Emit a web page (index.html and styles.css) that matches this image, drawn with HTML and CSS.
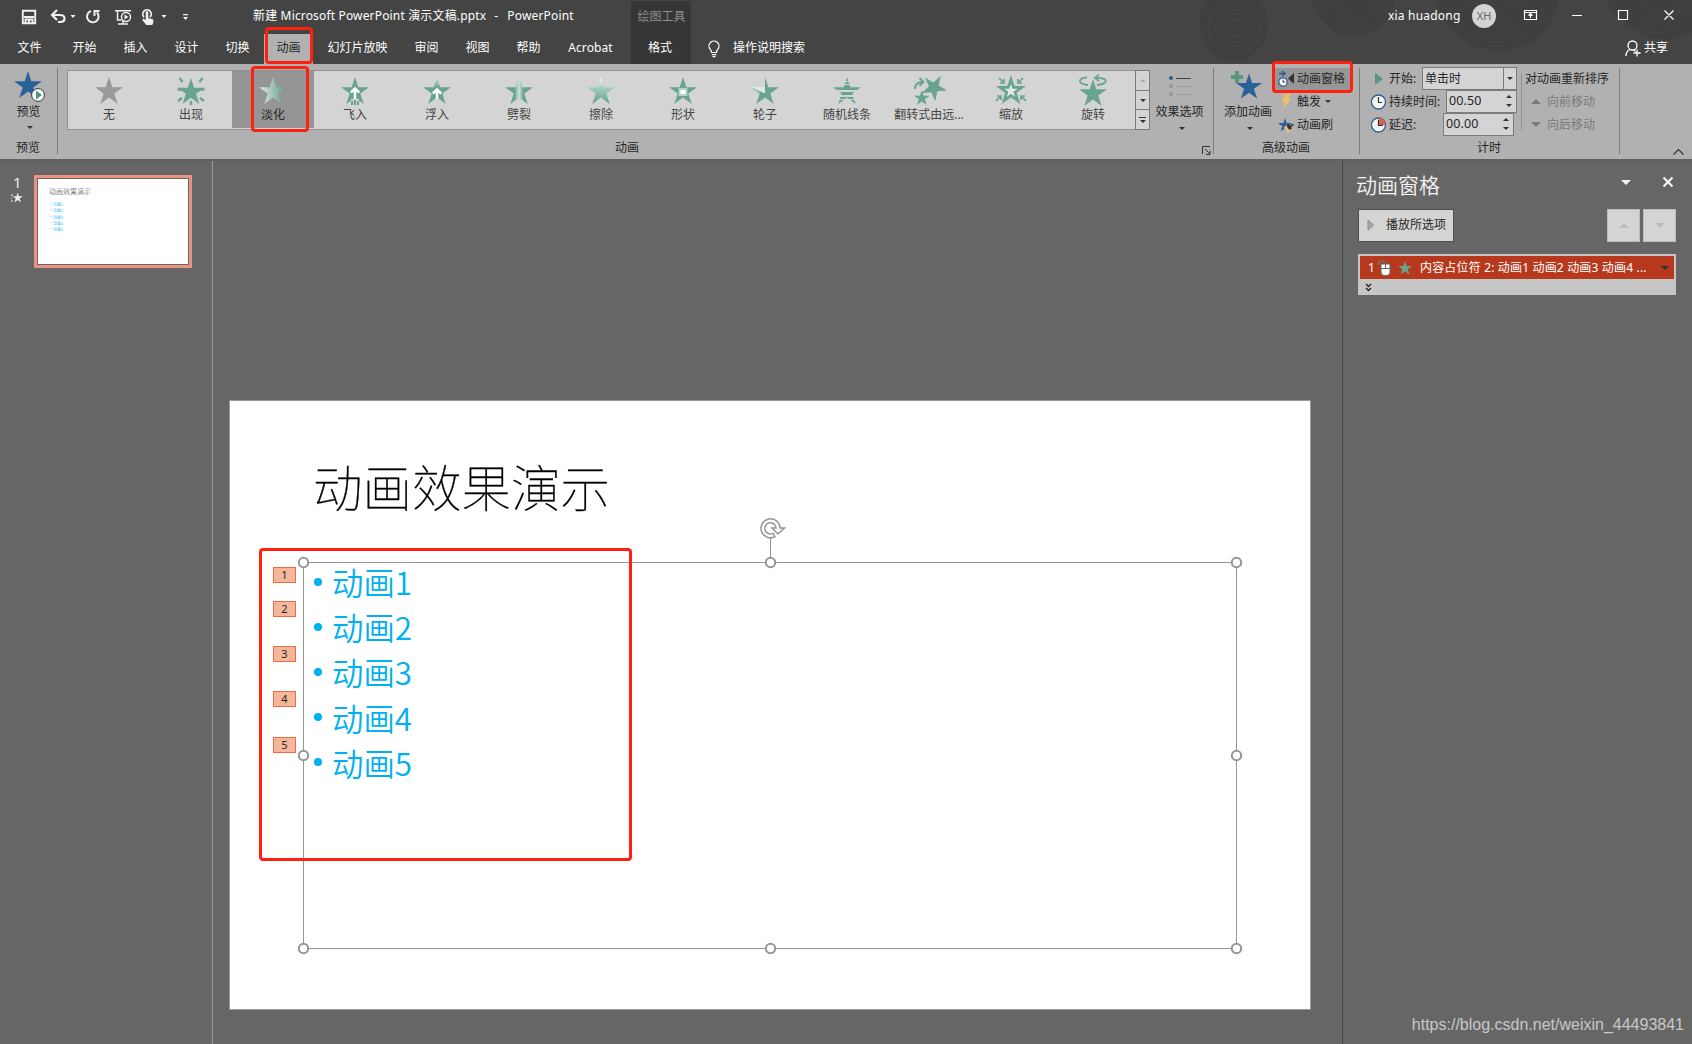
FILE: index.html
```html
<!DOCTYPE html>
<html lang="zh-CN">
<head>
<meta charset="utf-8">
<title>新建 Microsoft PowerPoint 演示文稿.pptx - PowerPoint</title>
<link rel="stylesheet" href="styles.css">
</head>
<body>
<svg width="0" height="0" class="defs">
  <defs>
    <linearGradient id="fadeX"><stop offset="0" stop-color="#dfeae5"/><stop offset="1" stop-color="#5c9c87"/></linearGradient>
    <linearGradient id="fadeY" x2="0" y2="1"><stop offset="0" stop-color="#f4f8f6"/><stop offset=".45" stop-color="#9fc9ba"/><stop offset="1" stop-color="#5fa08b"/></linearGradient>
    <linearGradient id="floatY" x2="0" y2="1"><stop offset="0" stop-color="#d3e3dc"/><stop offset=".4" stop-color="#68a490"/></linearGradient>
    <linearGradient id="splitX"><stop offset=".34" stop-color="#68a490"/><stop offset=".5" stop-color="#cfe2da"/><stop offset=".66" stop-color="#68a490"/></linearGradient>
    <path id="star" d="M14 0l3.3 10.2H28l-8.7 6.3 3.4 10.5L14 20.6 5.3 27l3.4-10.5L0 10.2h10.7z"/>
    <clipPath id="bars"><path d="M0 0h28v4H0zM0 5h28v2H0zM0 8h28v5H0zM0 15h28v3H0zM0 20h28v2H0zM0 23h28v5H0z"/></clipPath>
  </defs>
</svg>
<div class="app">
  <header class="header">
    <svg class="rings" width="512" height="64" viewBox="1180 0 512 64">
      <g fill="#3f3f3f"><path d="M1199 20l3-11 5-9h53l6 12 2 16-4 14-9 12-12 7-14 1-13-5-9-11-6-14zM1310 0h86l-8 18-14 12-22 7-18-5-14-14zM1434 0h126l-10 24-16 17-32 11-28-5-24-19zM1606 0h86v32l-20 8-22-2-22-12-15-15z"/></g>
      <g fill="none" stroke="#454545" stroke-width=".8">
        <circle cx="1236" cy="28" r="4"/><circle cx="1236" cy="28" r="9"/><circle cx="1235" cy="28" r="14"/><circle cx="1235" cy="28" r="19"/><circle cx="1234" cy="28" r="26" stroke-width="1.500"/>
        <ellipse cx="1353" cy="-3" rx="34" ry="33"/><ellipse cx="1353" cy="-3" rx="26" ry="25"/><ellipse cx="1353" cy="-3" rx="19" ry="18"/><ellipse cx="1353" cy="-3" rx="12" ry="11"/>
        <ellipse cx="1496" cy="-3" rx="50" ry="45"/><ellipse cx="1496" cy="-3" rx="42" ry="38"/><ellipse cx="1496" cy="-3" rx="34" ry="30"/><ellipse cx="1496" cy="-3" rx="26" ry="23"/><ellipse cx="1496" cy="-3" rx="17" ry="15"/>
        <ellipse cx="1654" cy="2" rx="36" ry="31"/><ellipse cx="1654" cy="2" rx="28" ry="24"/><ellipse cx="1654" cy="2" rx="20" ry="17"/><ellipse cx="1654" cy="2" rx="12" ry="10"/>
      </g>
    </svg>
    <div class="titlebar">
      <svg class="quick" width="200" height="32" viewBox="0 0 200 32" fill="none" stroke="#f0f0f0" stroke-width="1.600">
        <path d="M22.800 10.800h12.400v12.400H22.800zM24 17h10M25.500 23v-3.500h7V23" stroke-width="1.900"/><path d="M28 20h2v3h-2z" fill="#f0f0f0" stroke="none"/>
        <path d="M53 15h7c6 0 6 7 0 7h-2M57 10l-5 5 5 5" stroke-width="2.200"/>
        <path d="M97 12.500a5.800 5.800 0 1 1-6-1.500M99.500 11h-5v5" stroke-width="2"/>
        <path d="M115 10.700h16M117.500 11v9h4M118 24h10M123 20v4" stroke-width="1.400"/><circle cx="126" cy="17" r="4.500" stroke-width="1.400"/><path d="M124.500 14.500l4 2.500-4 2.500z" fill="#f0f0f0" stroke="none"/>
        <path d="M144 17a4.200 4.200 0 1 1 6 0" stroke-width="1.800"/><path d="M145.700 12q1.300-2 2.600 0v6l5 1.500v3l-1 2.500h-6l-4-5 1-1.500 2.400 1.500z" fill="#f0f0f0" stroke="none"/>
        <path d="M70.500 15h5l-2.500 3zM161.500 15h5l-2.500 3zM183 17h5l-2.500 3zM183 14h5v1.200h-5z" fill="#f0f0f0" stroke="none"/>
      </svg>
      <div class="doc-title">新建 Microsoft PowerPoint 演示文稿.pptx<span class="dash">-</span>PowerPoint</div>
      <div class="user">xia huadong</div>
      <div class="avatar">XH</div>
      <svg class="winbtns" width="184" height="32" viewBox="1508 0 184 32" fill="none" stroke="#fff" stroke-width="1.200">
        <path d="M1524.500 10.500h12v9h-12zM1524.500 12.500h12M1530.500 18v-4M1528.500 15.500l2-2 2 2M1572 15.500h10M1618.500 10.500h9v9h-9zM1664.500 10.500l9 9M1673.500 10.500l-9 9"/>
      </svg>
    </div>
    <nav class="tabs">
      <span class="tab file">文件</span><span class="tab">开始</span><span class="tab">插入</span><span class="tab">设计</span><span class="tab">切换</span><span class="tab active">动画<i class="mark mark-tab"></i></span><span class="tab">幻灯片放映</span><span class="tab">审阅</span><span class="tab">视图</span><span class="tab">帮助</span><span class="tab acrobat">Acrobat</span>
      <span class="tab format">格式</span>
      <svg class="bulb" width="14" height="18" viewBox="0 0 14 18" fill="none" stroke="#fff" stroke-width="1.200"><path d="M4.500 12.500q0-2-1.500-3.500a5 5 0 1 1 8 0q-1.500 1.500-1.500 3.500zM4.800 14.600h4.500M5.500 16.600h3"/></svg>
      <span class="search">操作说明搜索</span>
      <span class="share"><svg width="16" height="17" viewBox="0 0 16 17" fill="none" stroke="#fff" stroke-width="1.300"><circle cx="7.500" cy="5.500" r="4.500"/><path d="M1 16q0-5 4-6.500M8.500 10l2 1.500M12 9.500v7M8.500 13h7"/></svg>共享</span>
    </nav>
    <div class="context-tool">绘图工具</div>
  </header>

  <section class="ribbon">
    <div class="group preview">
      <svg width="31" height="31" viewBox="0 0 31 31"><use href="#star" fill="#2b6199"/><circle cx="24" cy="24" r="6.400" fill="#fff" stroke="#333"/><path d="M22 19.500l6 4.500-6 4.500z" fill="#4f947d"/></svg>
      <span>预览</span><b class="tri"></b>
      <label>预览</label>
    </div>
    <div class="group gallery-group">
      <div class="gallery">
        <div class="fx"><svg viewBox="0 0 34 32"><use href="#star" x="3" y="3" fill="#999"/></svg>无</div>
        <div class="fx"><svg viewBox="0 0 34 32"><use href="#star" transform="translate(3.500 4) scale(.96)" fill="#68a490"/><path d="M5.500 4l3 4M28.500 4l-3 4M3.500 15l4 1M30.500 15l-4 1M4 27l4-3M30 27l-4-3M17 27v4" stroke="#68a490" stroke-width="2.400"/></svg>出现</div>
        <div class="fx selected"><svg viewBox="0 0 34 32"><use href="#star" x="3" y="3" fill="url(#fadeX)"/></svg>淡化<i class="mark mark-fx"></i></div>
        <div class="fx"><svg viewBox="0 0 34 32"><use href="#star" x="3" y="3" fill="#68a490"/><path d="M13 25h8v6h-8z" fill="#d4d4d4"/><path d="M17 25V15M12.800 18.500l4.200-4 4.200 4" fill="none" stroke="#fff" stroke-width="2.500"/><path d="M14 27v4M17 26v5M20 27v4" stroke="#68a490" stroke-width="2"/></svg>飞入</div>
        <div class="fx"><svg viewBox="0 0 34 32"><use href="#star" x="3" y="3" fill="url(#floatY)"/><path d="M17 25v-9M12.800 19.500l4.200-4 4.200 4" fill="none" stroke="#fff" stroke-width="2.500"/></svg>浮入</div>
        <div class="fx"><svg viewBox="0 0 34 32"><use href="#star" x="3" y="3" fill="url(#splitX)"/></svg>劈裂</div>
        <div class="fx"><svg viewBox="0 0 34 32"><use href="#star" x="3" y="3" fill="url(#fadeY)"/></svg>擦除</div>
        <div class="fx"><svg viewBox="0 0 34 32"><use href="#star" x="3" y="3" fill="#68a490"/><path d="M13.500 15h7v6h-7z" fill="#fff" stroke="#b5d2c8" stroke-width="1.800"/></svg>形状</div>
        <div class="fx"><svg viewBox="0 0 34 32"><use href="#star" x="3" y="3" fill="#68a490"/><path d="M3 3h14v10H3z" fill="#d4d4d4"/><path d="M3 13h14v7l-5-1z" fill="url(#fadeX)"/><path d="M17 13v7l-5-1z" fill="#68a490"/><path d="M3.500 13H17v6.500z" fill="#dfeae5"/></svg>轮子</div>
        <div class="fx"><svg viewBox="0 0 34 32"><g transform="translate(3 3)"><use href="#star" fill="#68a490" clip-path="url(#bars)"/></g></svg>随机线条</div>
        <div class="fx"><svg viewBox="0 0 34 32"><use href="#star" transform="translate(22 13.500) rotate(30) scale(.92) translate(-14 -14.700)" fill="#68a490"/><use href="#star" transform="translate(2 16) scale(.56)" fill="#68a490"/><path d="M3 15q0-7 8-7M7.500 4l4 4-4 4" fill="none" stroke="#68a490" stroke-width="2"/></svg>翻转式由远...</div>
        <div class="fx"><svg viewBox="0 0 34 32"><use href="#star" transform="translate(6 5.500) scale(.78)" fill="#e2ece8" stroke="#68a490" stroke-width="3.500"/><path d="M5 4l5 5M10 5v4H6M29 4l-5 5M24 5v4h4M2 27l5-5M3 22h4v4M32 27l-5-5M31 22h-4v4" fill="none" stroke="#68a490" stroke-width="1.700"/></svg>缩放</div>
        <div class="fx"><svg viewBox="0 0 34 32"><use href="#star" x="3" y="5" fill="#68a490"/><path d="M12 11C2 10 1 4 11 3.500M19 4c14-1 14 6 2 7M23 .500l-4 3.500 4 3" fill="none" stroke="#68a490" stroke-width="1.800"/></svg>旋转</div>
        <div class="scroller"><span><b class="tri up faint"></b></span><span><b class="tri"></b></span><span class="more"><b class="tri"></b></span></div>
      </div>
      <label>动画</label>
    </div>
    <div class="group effect">
      <svg width="24" height="24" viewBox="0 0 24 24"><circle cx="3" cy="4" r="2.100" fill="#2b6199"/><circle cx="3" cy="12" r="2.100" fill="#999"/><circle cx="3" cy="20" r="2.100" fill="#999"/><path d="M8 4.500h15" stroke="#444"/><path d="M8 12.500h15M8 20.500h15" stroke="#999"/></svg>
      <span>效果选项</span><b class="tri"></b>
      <svg class="launcher" width="9" height="9" viewBox="0 0 9 9" fill="none" stroke="#333"><path d="M.5 8V.5H8M3 3l5 5M8 4.500V8.500H4"/></svg>
    </div>
    <div class="group advanced">
      <div class="add">
        <svg width="34" height="30" viewBox="0 0 34 30"><path d="M5 0h4v4h4v4H9v4H5V8H1V4h4z" fill="#5a957f"/><use href="#star" transform="translate(6 2.500) scale(.93)" fill="#2b6199"/></svg>
        <span>添加动画</span><b class="tri"></b>
      </div>
      <div class="adv-list">
        <div class="adv on"><svg width="17" height="16" viewBox="0 0 17 16"><path d="M1 2.500h5M4 0l3 2.500L4 5" fill="none" stroke="#2b6199" stroke-width="1.600"/><circle cx="5" cy="11" r="4.200" fill="#fff" stroke="#2b6199" stroke-width="1.300"/><path d="M5 8.500V11h2.500" fill="none" stroke="#333"/><path d="M16 2v11l-6-5.500z" fill="#333"/></svg>动画窗格<i class="mark mark-pane"></i></div>
        <div class="adv"><svg width="17" height="16" viewBox="0 0 17 16"><path d="M7 0h6l-3 5h3L5 15l2-7H3z" fill="#f0c068"/></svg>触发<b class="tri"></b></div>
        <div class="adv"><svg width="17" height="16" viewBox="0 0 17 16"><use href="#star" transform="translate(0 1) scale(.5)" fill="#2b6199"/><path d="M6 10l3-2 4 5-3 3-2-2z" fill="#e8bd78"/><path d="M9.500 9l2 3 1.500-1-2-3zM12.500 9l3-1.500" fill="#333" stroke="#333" stroke-width="1.400"/></svg>动画刷</div>
      </div>
      <label>高级动画</label>
    </div>
    <div class="group timing">
      <div class="time-fields">
        <div class="row"><svg width="18" height="18" viewBox="0 0 18 18"><path d="M5 3l8 6-8 6z" fill="#5a957f"/></svg>开始:<div class="field combo">单击时<span><b class="tri"></b></span></div></div>
        <div class="row"><svg width="18" height="18" viewBox="0 0 18 18"><circle cx="8.500" cy="9" r="7" fill="#f4f4f4" stroke="#2b6199" stroke-width="1.300"/><path d="M8.500 4v5.500H12" fill="none" stroke="#333" stroke-width="1.200"/></svg>持续时间:<div class="field spin dur">00.50<span><b class="tri up"></b><b class="tri"></b></span></div></div>
        <div class="row"><svg width="18" height="18" viewBox="0 0 18 18"><circle cx="8.500" cy="9" r="7" fill="#f4f4f4" stroke="#2b6199" stroke-width="1.300"/><path d="M8.500 9V1.500a7 7 0 0 1 7 7.500z" fill="#d4654b"/><path d="M8.500 4v5.500H13" fill="none" stroke="#333" stroke-width="1.200"/></svg>延迟:<div class="field spin delay">00.00<span><b class="tri up"></b><b class="tri"></b></span></div></div>
      </div>
      <div class="reorder">
        <div>对动画重新排序</div>
        <div class="off"><b class="tri up big"></b>向前移动</div>
        <div class="off"><b class="tri big"></b>向后移动</div>
      </div>
      <label>计时</label>
    </div>
    <svg class="collapse" width="13" height="8" viewBox="0 0 13 8" fill="none" stroke="#333" stroke-width="1.200"><path d="M1.500 6.500l5-5 5 5"/></svg>
  </section>

  <main class="body">
    <aside class="thumbs">
      <div class="num">1<svg width="12" height="12" viewBox="0 0 12 12"><use href="#star" transform="translate(1.500 .5) scale(.37)" fill="#eee"/><path d="M0 3h2M0 6h1M0 9h2" stroke="#eee"/></svg></div>
      <div class="thumb">
        <div class="t-title">动画效果演示</div>
        <ul><li>动画1</li><li>动画2</li><li>动画3</li><li>动画4</li><li>动画5</li></ul>
      </div>
    </aside>
    <section class="stage">
      <div class="slide">
        <h1>动画效果演示</h1>
        <ul class="bullets"><li>动画1</li><li>动画2</li><li>动画3</li><li>动画4</li><li>动画5</li></ul>
        <svg class="selection" width="1082" height="609" viewBox="229 400 1082 609" fill="none" stroke="#969696">
          <path d="M303.500 562.500h933v386h-933zM770.500 562V538"/>
          <g fill="#fff" stroke-width="2"><circle cx="303.500" cy="562.500" r="4.700"/><circle cx="770.500" cy="562.500" r="4.700"/><circle cx="1236.500" cy="562.500" r="4.700"/><circle cx="303.500" cy="755.500" r="4.700"/><circle cx="1236.500" cy="755.500" r="4.700"/><circle cx="303.500" cy="948.500" r="4.700"/><circle cx="770.500" cy="948.500" r="4.700"/><circle cx="1236.500" cy="948.500" r="4.700"/></g>
          <path d="M775 536.700A9.500 9.500 0 1 1 780 528h4.500l-6.500 6-6-6h4A5.600 5.600 0 1 0 773 533.300z" fill="#fff" stroke-width="1.500"/>
        </svg>
        <span class="tag t1">1</span><span class="tag t2">2</span><span class="tag t3">3</span><span class="tag t4">4</span><span class="tag t5">5</span>
        <i class="mark mark-body"></i>
      </div>
    </section>
    <aside class="pane">
      <div class="pane-head"><span>动画窗格</span><b class="tri big light"></b><svg width="12" height="12" viewBox="0 0 12 12" stroke="#f4f4f4" stroke-width="2.200"><path d="M1.500 1.500l9 9M10.500 1.500l-9 9"/></svg></div>
      <div class="pane-tools">
        <div class="play"><svg width="8" height="12" viewBox="0 0 8 12"><path d="M1 1l5.500 5L1 11z" fill="#aaa" stroke="#888"/></svg>播放所选项</div>
        <div class="sq"><b class="tri up big"></b></div><div class="sq"><b class="tri big"></b></div>
      </div>
      <div class="list">
        <div class="item"><span class="n">1</span>
          <svg width="36" height="18" viewBox="0 0 36 18"><path d="M0 5h2.500V2h4.500v3" fill="none" stroke="#777"/><path d="M4 5h9v8q0 3.500-4.500 3.500T4 13z" fill="#fff" stroke="#666"/><path d="M4 9.500h9M8.500 5v4.500" stroke="#666"/><use href="#star" transform="translate(21 2) scale(.5)" fill="#68a490"/></svg>
          <span class="desc">内容占位符 2: 动画1 动画2 动画3 动画4 ...</span><b class="tri dk"></b></div>
        <svg class="expand" width="7" height="9" viewBox="0 0 7 9" fill="none" stroke="#222" stroke-width="1.300"><path d="M1 1l2.500 2.500L6 1M1 5l2.500 2.500L6 5"/></svg>
      </div>
      <div class="watermark">https://blog.csdn.net/weixin_44493841</div>
    </aside>
  </main>
</div>
</body>
</html>
```
FILE: styles.css
```css
* { box-sizing: border-box; }
body { margin: 0; background: #666; font: 12px/16px "Noto Sans", "Noto Sans CJK SC", sans-serif; color: #262626; overflow: hidden; }
.defs { position: absolute; }
.app { width: 1692px; height: 1044px; display: flex; flex-direction: column; white-space: nowrap; }
i { font-style: normal; }
.mark { position: absolute; border: 3px solid #ff2010; border-radius: 4px; z-index: 5; }

/* title bar and tabs */
.header { position: relative; height: 64px; background: #444; color: #fff; flex: none; }
.rings { position: absolute; right: 0; top: 0; }
.titlebar { position: relative; height: 32px; display: flex; align-items: center; }
.doc-title { margin-left: 53px; width: 1135px; letter-spacing: .16px; }
.dash { margin: 0 9px 0 8px; }
.user { width: 84px; letter-spacing: .2px; }
.avatar { width: 24px; height: 24px; border-radius: 50%; background: #d4d4d4; color: #666; text-align: center; line-height: 24px; font-size: 11px; }
.winbtns { margin-left: auto; }
.tabs { position: relative; z-index: 1; height: 32px; display: flex; align-items: stretch; line-height: 28px; padding-left: 3px; }
.tab { width: 51px; text-align: center; padding-top: 2px; }
.tab.file { width: 53px; margin-right: 3px; }
.tab:nth-child(7) { width: 87px; }
.tab.active { position: relative; width: 49px; margin: 2px 1px 0; padding-top: 0; background: #b1b1b1; color: #262626; }
.mark-tab { left: 1px; top: -7px; width: 48px; height: 37px; }
.tab.acrobat { width: 73px; letter-spacing: .1px; }
.tab.format { width: 60px; margin-left: 3px; }
.bulb { margin: 8px 0 0 17px; }
.search { margin-left: 12px; padding-top: 2px; }
.share { margin-left: auto; margin-right: 24px; padding-top: 2px; display: flex; gap: 3px; }
.share svg { margin-top: 6px; }
.context-tool { position: absolute; left: 631px; top: 1px; width: 60px; height: 63px; background: #363636; color: #8c8c8c; text-align: center; padding: 8px 0 0 1px; }

/* ribbon */
.ribbon { position: relative; height: 95px; background: #b1b1b1; display: flex; flex: none; }
.group { position: relative; height: 95px; padding-top: 4px; display: flex; }
.group::after { content: ""; position: absolute; right: 0; top: 4px; height: 86px; width: 1px; background: #7c7c7c; }
.group > label { position: absolute; left: 0; right: 2px; top: 76px; text-align: center; }
.tri { display: inline-block; flex: none; width: 0; height: 0; border: 3px solid transparent; border-top-color: #333; border-bottom: 0; }
.tri.up { border-top: 0; border-bottom: 3px solid #333; }
.tri.up.faint { border-bottom-color: #aaa; }
.tri.big { border-width: 5px; border-bottom-width: 0; }
.tri.up.big { border-bottom-width: 5px; border-top-width: 0; }
.preview { width: 58px; flex-direction: column; align-items: center; padding-top: 7px; }
.preview > svg { margin-left: 1px; }
.preview > span { margin: 2px 1px 6px 0; }
.preview .tri { margin-left: 2px; }
.gallery-group { width: 1084px; margin-left: 9px; padding-top: 6px; }
.gallery-group::after { display: none; }
.group.gallery-group > label { left: 10px; right: auto; width: 1100px; }
.gallery { height: 60px; width: 1083px; border: 1px solid #919191; background: #d4d4d4; display: flex; }
.fx { position: relative; width: 82px; flex: none; height: 57px; text-align: center; display: flex; flex-direction: column; align-items: center; color: #444; }
.fx svg { width: 34px; height: 32px; margin: 3px 0 1px; }
.fx.selected { background: #959595; color: #262626; }
.mark-fx { left: 19px; top: -5px; width: 58px; height: 66px; }
.scroller { width: 15px; height: 60px; margin: -1px -1px 0 auto; flex: none; border: 1px solid #7c7c7c; display: flex; flex-direction: column; }
.scroller span { height: 19px; border-bottom: 1px solid #7c7c7c; display: flex; align-items: center; justify-content: center; flex: 1; }
.scroller .more { border: 0; flex-direction: column; }
.more::before { content: ""; width: 7px; height: 1px; background: #333; margin-bottom: 2px; }
.effect { width: 63px; flex-direction: column; align-items: center; padding: 10px 6px 0 0; }
.effect > span { margin: 6px 0 7px; }
.effect > .tri { margin-left: 4px; }
.effect > svg:first-child { margin-left: 0; }
.launcher { position: absolute; left: 51px; top: 82px; }
.advanced { width: 146px; }
.add { width: 62px; margin-left: 3px; display: flex; flex-direction: column; align-items: center; padding-top: 3px; }
.add svg { margin-right: 2px; }
.add span { margin: 3px 0 7px; }
.add .tri { margin-left: 4px; }
.adv-list { margin-left: -4px; }
.adv { position: relative; height: 23px; display: flex; align-items: center; gap: 2px; padding: 0 0 2px 3px; width: 76px; }
.adv .tri { margin-left: 2px; }
.adv.on { background: #969696; height: 22px; margin-bottom: 1px; padding-bottom: 0; }
.mark-pane { left: -3px; top: -7px; width: 81px; height: 32px; }
.timing { width: 260px; }
.time-fields { width: 161px; padding-left: 10px; margin-top: -1px; }
.row { display: flex; align-items: center; height: 23px; gap: 1px; }
.row:nth-child(n+2) { line-height: 14px; padding-bottom: 0; }
.field { margin-left: auto; height: 23px; border: 1px solid #7c7c7c; background: #d4d4d4; display: flex; align-items: center; padding-left: 2px; font-size: 12px; }
.row:nth-child(1), .row:nth-child(2) { padding-right: 4px; }
.row:nth-child(3) { padding-right: 7px; }
.combo { width: 95px; }
.combo span { margin-left: auto; width: 13px; height: 21px; border-left: 1px solid #7c7c7c; display: flex; align-items: center; justify-content: center; }
.spin { width: 71px; font-size: 12.500px; letter-spacing: .1px; padding-bottom: 1px; }
.spin span { margin-left: auto; margin-right: 4px; display: flex; flex-direction: column; gap: 6px; }
.reorder { margin-top: 5px; height: 57px; border-left: 1px solid #919191; padding-left: 4px; }
.reorder div { height: 23px; display: flex; align-items: center; gap: 6px; }
.reorder div:first-child { margin: -6px 0 0 -1px; }
.reorder .off { color: #7a7a7a; padding-left: 5px; }
.off .tri { border-top-color: #7a7a7a; }
.off .tri.up { border-bottom-color: #7a7a7a; }
.collapse { position: absolute; left: 1672px; top: 84px; }

/* workspace */
.body { flex: 1; display: flex; min-height: 0; border-top: 2px solid #606060; }
.thumbs { width: 213px; border-right: 1px solid #999; display: flex; padding: 14px 0 0 11px; }
.num { width: 23px; color: #eee; font-size: 15px; display: flex; flex-direction: column; padding: 0 0 0 2px; line-height: 14px; }
.num svg { margin-top: 3px; margin-left: -2px; }
.thumb { width: 158px; height: 93px; border: 3px solid #ea9383; outline: 1px solid #666; outline-offset: -4px; background: #fff; padding: 9px 12px; }
.t-title { font: 300 7px/9px "Noto Sans CJK SC", sans-serif; color: #333; }
.thumb ul { list-style: none; margin: 5px 0 0; padding: 0; font: 300 4px/6.300px "Noto Sans CJK SC", sans-serif; color: #00a5ef; }
.thumb li::before { content: "•"; margin-right: 0; }
.stage { flex: 1; padding: 239px 0 0 16px; }
.slide { position: relative; width: 1082px; height: 610px; background: #fff; border: 1px solid #999; padding: 49px 0 0 83px; }
.slide h1 { margin: 0; font: 100 49.500px/72px "Noto Sans CJK SC", sans-serif; color: #000; -webkit-text-stroke: .3px #000; }
.bullets { list-style: none; margin: 37px 0 0 1px; padding: 0; font: 350 31.400px/45.200px "Noto Sans CJK SC", sans-serif; color: #00b0f0; }
.bullets li { display: flex; align-items: center; gap: 10px; }
.bullets li::before { content: ""; width: 8px; height: 8px; border-radius: 50%; background: #00b0f0; }
.selection { position: absolute; left: -1px; top: -1px; }
.tag { position: absolute; left: 43px; width: 23px; height: 16px; border: 1px solid #ee6a45; background: #f5b79c; color: #262626; font-size: 11px; line-height: 13px; text-align: center; }
.t1 { top: 166px; } .t2 { top: 200px; } .t3 { top: 245px; } .t4 { top: 290px; } .t5 { top: 336px; }
.mark-body { left: 29px; top: 147px; width: 373px; height: 313px; }

/* animation pane */
.pane { width: 350px; border-left: 1px solid #444; padding: 9px 16px 0 15px; display: flex; flex-direction: column; }
.pane-head { color: #f4f4f4; font: 350 21px/28px "Noto Sans CJK SC", sans-serif; display: flex; margin-left: -2px; }
.pane-head .tri { margin: 10px 31px 0 auto; }
.tri.light { border-top-color: #f4f4f4; }
.pane-head svg { margin: 6px 2px 0 0; }
.pane-tools { display: flex; gap: 3px; margin-top: 11px; }
.play { width: 96px; height: 33px; border: 1px solid #505050; background: #d4d4d4; display: flex; align-items: center; padding: 0 0 2px 8px; gap: 11px; margin-right: auto; }
.sq { width: 33px; height: 33px; background: #d4d4d4; border: 1px solid #bbb; display: flex; align-items: center; justify-content: center; }
.sq .tri { border-top-color: #bbb; } .sq .tri.up { border-bottom-color: #bbb; }
.list { margin-top: 12px; height: 41px; background: #c6c6c6; padding: 2px; }
.item { height: 23px; background: #b7391d; color: #fff; display: flex; align-items: center; padding-left: 8px; }
.item .n { width: 9px; }
.desc { margin-left: 7px; width: 241px; letter-spacing: .17px; }
.tri.dk { border-width: 4px; border-bottom: 0; }
.expand { display: block; margin: 4px 0 0 5px; }
.watermark { margin-top: auto; margin-bottom: 8px; margin-right: -8px; text-align: right; font: 16px/22px "Liberation Sans", sans-serif; color: #c8c8c8; }
```
